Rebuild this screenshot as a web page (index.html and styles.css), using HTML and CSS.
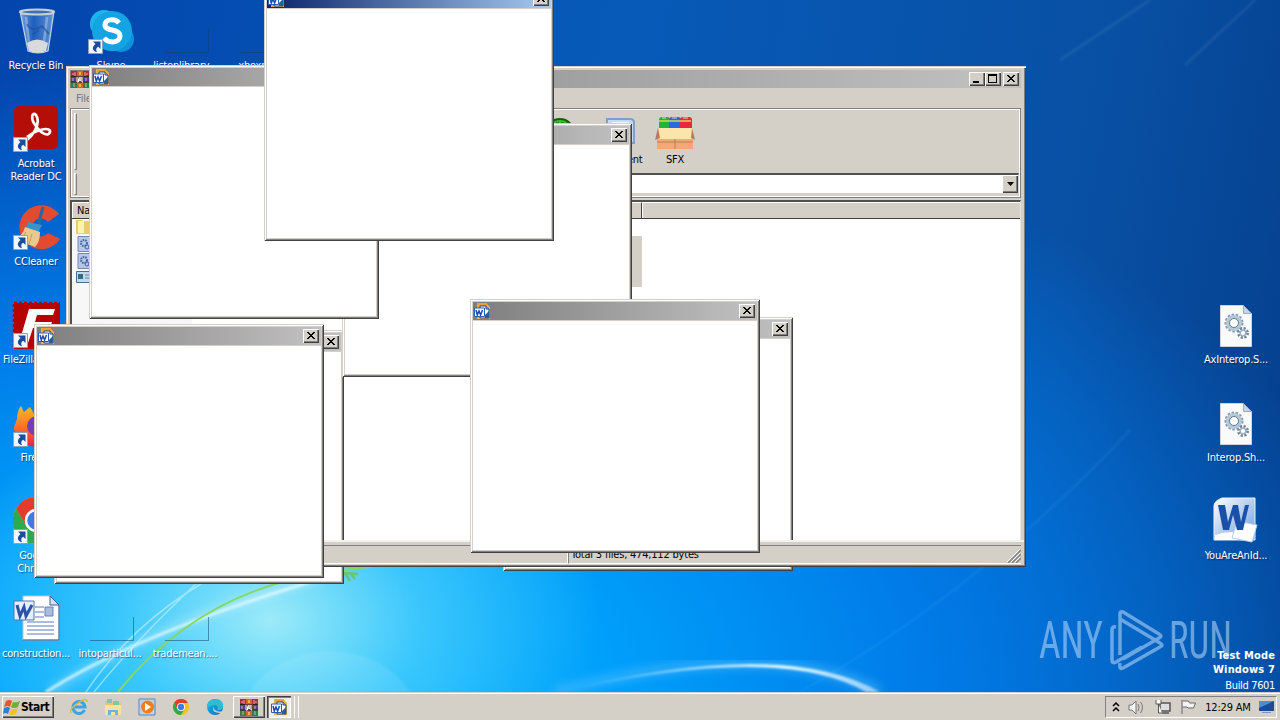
FILE: index.html
```html
<!DOCTYPE html>
<html lang="en">
<head>
  <meta charset="UTF-8">
  <meta name="viewport" content="width=device-width, initial-scale=1.0">
  <title>Desktop</title>
  <link rel="stylesheet" href="styles.css">
</head>
<body>

<!-- Shared icons -->
<svg class="defs" width="0" height="0">
  <defs>
    <symbol id="worddoc" viewBox="0 0 16 16">
      <path d="M3 0h9l4 4v12H3z" fill="#e9b04c"/>
      <path d="M4 0h9v3H4z" fill="#f0a030"/>
      <path d="M6 3h6l3 3v9H6z" fill="#fff" stroke="#1f4680"/>
      <path d="M12 3v3h3" fill="#9cc0ee" stroke="#1f4680"/>
      <path d="M.5 5h10v8.500H.5z" fill="#fff" stroke="#2a5cb4"/>
      <path d="M2 7l1.300 5L5 8l1.600 4L8.500 7" fill="none" stroke="#164ca8" stroke-width="1.500"/>
      <path d="M11 12l4-4v7h-4z" fill="#2c5c9c"/>
    </symbol>
    <symbol id="rar" viewBox="0 0 18 17">
      <path d="M0 0h18v6H0z" fill="#b02838"/>
      <path d="M0 6h18v5H0z" fill="#5a3ca8"/>
      <path d="M0 11h18v6H0z" fill="#2c8048"/>
      <path d="M0 5.500h18M0 11h18" stroke="#222"/>
      <path d="M2 2v2M4 1v4M14 1v4M16 2v2M2 7v3M15 7v3M3 12v4M15 12v4" stroke="#e0b0a0"/>
      <path d="M6 0h6v17H6z" fill="#d86420"/>
      <path d="M5 5h8v7H5z" fill="#604030"/>
      <path d="M6 6v5h1.500V7.500M8.300 6v3.500h1.500V6M11 6v5h1" stroke="#fff" fill="none"/>
      <path d="M8 1h2v3H8zM8 13h2v3H8z" fill="#f0b040"/>
    </symbol>
    <symbol id="shortcut" viewBox="0 0 15 15">
      <path d="M.5.500h14v14H.5z" fill="#f2f7fc" stroke="#8ba2b8"/>
      <path d="M5 2.500h7.500V10l-2.200-2.200C7.800 9 7.800 10.700 9 13.300 4.500 12 3.300 8.500 7.500 5z" fill="#1c4c9c"/>
    </symbol>
    <symbol id="dll" viewBox="0 0 32 42">
      <path d="M.5.500h23l8 8v33H.5z" fill="#fafafa" stroke="#ccd4dc"/>
      <path d="M23.500.500v8h8z" fill="#c8d4e2" stroke="#9cacbe"/>
      <circle cx="14" cy="18" r="7.500" fill="none" stroke="#8298ac" stroke-width="4" stroke-dasharray="2.200 1.460"/>
      <circle cx="14" cy="18" r="6" fill="none" stroke="#b4c8da" stroke-width="4"/>
      <circle cx="14" cy="18" r="4.500" fill="#fff" stroke="#63798c"/>
      <circle cx="23" cy="28" r="4" fill="none" stroke="#71869a" stroke-width="4" stroke-dasharray="1.800 1.340"/>
      <circle cx="23" cy="28" r="2.800" fill="#fff" stroke="#9fb2c4" stroke-width="1.500"/>
    </symbol>
    <symbol id="chrome" viewBox="0 0 48 48">
      <circle cx="24" cy="24" r="24" fill="#fbc116"/>
      <path d="M3.200 12A24 24 0 0 1 44.800 12H24L13.600 30z" fill="#e33b2e"/>
      <path d="M3.200 12A24 24 0 0 0 24 48L34.400 30 24 36 13.600 30z" fill="#2da94f"/>
      <circle cx="24" cy="24" r="12" fill="#fff"/>
      <circle cx="24" cy="24" r="9.500" fill="#3e7be8"/>
    </symbol>
    <symbol id="close" viewBox="0 0 16 14">
      <path d="M4 3l7 7M5 3l7 7M11 3l-7 7M12 3l-7 7" stroke="#000" stroke-width="1"/>
    </symbol>
    <linearGradient id="edge" x1="0" x2="1" y1="0" y2="1">
      <stop offset="0" stop-color="#0cc0e8"/>
      <stop offset="1" stop-color="#1466c4"/>
    </linearGradient>
    <linearGradient id="fox" x1="0" x2="0" y1="0" y2="1">
      <stop offset="0" stop-color="#ffba24"/>
      <stop offset=".5" stop-color="#ff7424"/>
      <stop offset="1" stop-color="#e81c58"/>
    </linearGradient>
    <linearGradient id="wordblue" x1="0" x2="1" y1="0" y2="1">
      <stop offset="0" stop-color="#fff"/>
      <stop offset="1" stop-color="#6c9cdc"/>
    </linearGradient>
    <linearGradient id="glass" x1="0" x2="1" y1="0" y2="0">
      <stop offset="0" stop-color="#a9cdf0" stop-opacity=".75"/>
      <stop offset=".4" stop-color="#3c78cc" stop-opacity=".5"/>
      <stop offset="1" stop-color="#a9cdf0" stop-opacity=".6"/>
    </linearGradient>
  </defs>
</svg>

<div class="desktop">

  <!-- Wallpaper -->
  <svg class="wallpaper" viewBox="0 0 1280 692" preserveAspectRatio="none">
    <defs>
      <linearGradient id="swoosh" x1="0" x2="1" y1="0" y2="0">
        <stop offset="0" stop-color="#fff" stop-opacity="0"/>
        <stop offset=".7" stop-color="#e8fcff" stop-opacity=".95"/>
        <stop offset="1" stop-color="#fff" stop-opacity=".5"/>
      </linearGradient>
      <filter id="soft"><feGaussianBlur stdDeviation="1"/></filter>
      <filter id="softer"><feGaussianBlur stdDeviation="5"/></filter>
    </defs>
    <path d="M50 692Q150 625 320 578" fill="none" stroke="#fff" stroke-opacity=".3" stroke-width="8" filter="url(#softer)"/>
    <path d="M46 692Q140 632 330 576" fill="none" stroke="#e4fbff" stroke-opacity=".75" stroke-width="3" filter="url(#soft)"/>
    <path d="M86 692Q130 626 204 582M94 692Q136 640 198 582" fill="none" stroke="#d4f6ff" stroke-opacity=".55" stroke-width="1.500"/>
    <path d="M118 692Q200 590 330 572T440 566" fill="none" stroke="#86d860" stroke-width="2"/>
    <path d="M344 572l6 9M345 573l13 1M351 574l4 5" fill="none" stroke="#6cc46c" stroke-width="2.500"/>
    <path d="M250 692a90 75 0 0 1 160 0z" fill="#fff" fill-opacity=".09" filter="url(#soft)"/>
    <path d="M555 692Q770 635 880 692" fill="none" stroke="#62c4ff" stroke-opacity=".45" stroke-width="10" filter="url(#softer)"/>
    <path d="M560 692Q780 636 880 692L866 692Q780 642 560 692z" fill="url(#swoosh)" filter="url(#soft)"/>
    <path d="M1060 60L1150 0M1185 65L1255 0" stroke="#88a8d8" stroke-opacity=".14" stroke-width="3" filter="url(#soft)"/>
    <path d="M800 692Q980 590 1130 430" fill="none" stroke="#54b4ff" stroke-opacity=".15" stroke-width="2" filter="url(#soft)"/>
  </svg>

  <!-- Desktop shortcuts -->
  <div class="shortcut recycle">
    <svg class="pic" width="48" height="48" viewBox="0 0 48 48">
      <path d="M8 4h34l-6 40q-10 4-20 0z" fill="url(#glass)" stroke="#bed4e8" stroke-width="1.200"/>
      <path d="M14 10l3 26M35 10l-3 25" stroke="#fff" stroke-opacity=".3" stroke-width="2.500"/>
      <ellipse cx="25" cy="5" rx="17" ry="2.500" fill="#3e70b8" stroke="#c8d0d4" stroke-width="2"/>
      <path d="M15 36q10-7 21 0l-2 8q-9 4-17 0z" fill="#d8dadb"/>
      <path d="M15 17q5 9 15 2l7 8M20 28l7-5" stroke="#1c4ca0" fill="none" stroke-width="2" opacity=".6"/>
    </svg>
    <span>Recycle Bin</span>
  </div>
  <div class="shortcut skype">
    <svg class="pic" width="48" height="48" viewBox="0 0 48 48">
      <circle cx="17" cy="17" r="14" fill="#1eb4ea"/>
      <circle cx="34" cy="32" r="13" fill="#0d92dc"/>
      <circle cx="25" cy="24" r="20" fill="#14a4e4"/>
      <path d="M32 16c-4-5-14-4-14 2 0 7 15 3 15 11 0 7-11 8-16 2" fill="none" stroke="#fff" stroke-width="5"/>
      <use href="#shortcut" x="1" y="32" width="15" height="15"/>
    </svg>
    <span>Skype</span>
  </div>
  <div class="shortcut listen"><i class="ghost"></i><span>listenlibrary...</span></div>
  <div class="shortcut xbox"><i class="ghost"></i><span>xboxpo...</span></div>
  <div class="shortcut acrobat">
    <svg class="pic" width="48" height="48" viewBox="0 0 48 48">
      <rect x="2" y="1" width="44" height="43" rx="5" fill="#b50d08"/>
      <path d="M13 36c9-5 16-19 11-26-4-4-6 4 0 11 5 8 13 11 14 6s-11-4-23 5" fill="none" stroke="#fff" stroke-width="2.700"/>
      <use href="#shortcut" x="1" y="32" width="15" height="15"/>
    </svg>
    <span>Acrobat<br>Reader DC</span>
  </div>
  <div class="shortcut ccleaner">
    <svg class="pic" width="48" height="48" viewBox="0 0 48 48">
      <path d="M47 11A22 22 0 1 0 48 36L36 30A9 9 0 1 1 36 19z" fill="#e24b30"/>
      <path d="M31 4l-5 18" stroke="#246a9c" stroke-width="3"/>
      <path d="M16 19l14 3-4 8-13-4z" fill="#3894c8"/>
      <path d="M13 24l15 5q0 10-5 15L3 36q8-4 10-12z" fill="#eac890"/>
      <path d="M14 29l-5 8M20 31l-3 10" stroke="#c69b60"/>
      <use href="#shortcut" x="1" y="32" width="15" height="15"/>
    </svg>
    <span>CCleaner</span>
  </div>
  <div class="shortcut filezilla">
    <svg class="pic" width="48" height="48" viewBox="0 0 48 48">
      <rect x="2" y="2" width="46" height="46" fill="#b40404" stroke="#b40404" stroke-width="2.500" stroke-dasharray="3 2"/>
      <path d="M17 8h26l-2 6H25l-2 7h17l-2 6H21l-5 15H7z" fill="#fff"/>
      <circle cx="35" cy="39" r="4" fill="#fff"/>
      <use href="#shortcut" x="1" y="32" width="15" height="15"/>
    </svg>
    <span>FileZilla Client</span>
  </div>
  <div class="shortcut firefox">
    <svg class="pic" width="48" height="48" viewBox="0 0 48 48">
      <path d="M5 17Q5 9 9 4l3 6 6-5 4 7 16 5q13 23-12 28Q2 43 2 25z" fill="url(#fox)"/>
      <circle cx="25" cy="24" r="10" fill="#7140b8"/>
      <use href="#shortcut" x="1" y="30" width="15" height="15"/>
    </svg>
    <span>Firefox</span>
  </div>
  <div class="shortcut chrome">
    <svg class="pic" width="48" height="48" viewBox="0 0 48 48">
      <use href="#chrome" x="1" width="47" height="47"/>
      <use href="#shortcut" x="1" y="32" width="15" height="15"/>
    </svg>
    <span>Google<br>Chrome</span>
  </div>
  <div class="shortcut construction">
    <svg class="pic" width="48" height="48" viewBox="0 0 48 48">
      <path d="M11 1h27l9 9v35H11z" fill="#fff" stroke="#b3c4dc"/>
      <path d="M38 1v9h9z" fill="#d8e2f0" stroke="#3c5c94"/>
      <path d="M47 10v35H11" fill="none" stroke="#40608c"/>
      <path d="M23 12h9M23 17h9M23 22h9M15 27h27M15 31h27M15 35h27M15 39h27" stroke="#90a8d4" stroke-width="1.500"/>
      <path d="M33 12h8v9h-8z" fill="#a8bce0" stroke="#6882b8"/>
      <path d="M2 6h20v19H2z" fill="#e6eefa" stroke="#4e76b8"/>
      <path d="M5 10l3 11 4-9 2 9 6-11" fill="none" stroke="#2b55a4" stroke-width="3"/>
    </svg>
    <span>construction...</span>
  </div>
  <div class="shortcut intopart"><i class="ghost"></i><span>intoparticul...</span></div>
  <div class="shortcut trademean"><i class="ghost"></i><span>trademean....</span></div>
  <div class="shortcut axinterop">
    <svg class="pic" width="48" height="48"><use href="#dll" x="8" y="4" width="32" height="42"/></svg>
    <span>AxInterop.S...</span>
  </div>
  <div class="shortcut interop">
    <svg class="pic" width="48" height="48"><use href="#dll" x="8" y="4" width="32" height="42"/></svg>
    <span>Interop.Sh...</span>
  </div>
  <div class="shortcut youare">
    <svg class="pic" width="48" height="48" viewBox="0 0 48 48">
      <path d="M10 1h33v42H2V9q0-5 8-8z" fill="url(#wordblue)" stroke="#eaf2ff"/>
      <path d="M3 38q18-6 34 0v5H3z" fill="#fff"/>
      <path d="M25 24l20 4-5 17-20-4z" fill="#fff" stroke="#b8cbe8"/>
      <path d="M6 8h7l3 17 5-17h5l3 17 4-17h4l-6 25h-6l-4-15-4 15h-6z" fill="#1a51a8"/>
    </svg>
    <span>YouAreAnId...</span>
  </div>

  <!-- Watermark -->
  <svg class="watermark" width="200" height="64" viewBox="0 0 200 64">
    <text x="1" y="49" textLength="64" lengthAdjust="spacingAndGlyphs">ANY</text>
    <path d="M74 51V21q0-4 4-3M74 51q0 4 4 2l26-15M82 46V5q0-3 3-2l36 22q4 2 0 4L85 50M82 10l40 24q4 2 0 4L85 59q-4 2-3-5" fill="none" stroke="#cfe6ff" stroke-width="3.500" stroke-linejoin="round"/>
    <text x="131" y="49" textLength="63" lengthAdjust="spacingAndGlyphs">RUN</text>
  </svg>
  <div class="build"><b>Test Mode</b><b>Windows 7</b><span>Build 7601</span></div>

  <!-- Archive manager -->
  <div class="archive">
    <div class="titlebar">
      <svg width="18" height="17"><use href="#rar"/></svg>
      <div class="controls">
        <div class="btn"><svg width="16" height="14"><path d="M4 9h6v2H4z"/></svg></div>
        <div class="btn"><svg width="16" height="14"><path d="M3 2h9v9H3zM4 4v6h7V4z" fill-rule="evenodd"/></svg></div>
        <div class="btn last"><svg width="16" height="14"><use href="#close"/></svg></div>
      </div>
    </div>
    <div class="menubar">File</div>
    <div class="toolbox">
      <div class="toolbar">
        <i class="grip"></i>
        <div class="tool scan">
          <svg width="40" height="40" viewBox="0 0 40 40"><circle cx="17" cy="20" r="14" fill="#30c820" stroke="#185c10" stroke-width="2"/><path d="M8 11h18" stroke="#174c10" stroke-width="3" stroke-dasharray="3 2"/></svg>
        </div>
        <div class="tool comment">
          <svg width="40" height="40" viewBox="0 0 40 40"><path d="M8 6h23q4 0 4 4v20H8z" fill="#c6dbf0" stroke="#7e9fc6" stroke-width="2"/><path d="M13 10h14q4 0 4 4v13H9" fill="none" stroke="#f2f8ff" stroke-width="2"/></svg>
          <span>Comment</span>
        </div>
        <div class="tool">
          <svg width="40" height="40" viewBox="0 0 40 40">
            <rect x="4" y="4" width="11" height="16" rx="3" fill="#26b03c"/><rect x="14" y="4" width="12" height="16" rx="3" fill="#2e68e0"/><rect x="25" y="4" width="12" height="16" rx="3" fill="#e8283c"/>
            <path d="M4 8h32" stroke="#d8d84c" stroke-width="1.500"/>
            <path d="M7 5h4M17 5h5M28 5h5" stroke="#fff" stroke-opacity=".5" stroke-width="1.500"/>
            <path d="M2 18h36v18H2z" fill="#f3a878"/>
            <path d="M20 20v16M2 29h36" stroke="#c87850"/>
            <path d="M4 15h33l2 11H1z" fill="#fce5aa"/>
            <path d="M3 15L0 27l5-2zM37 15l3 12-4-2z" fill="#b87860"/>
          </svg>
          <span>SFX</span>
        </div>
      </div>
      <div class="address">
        <i class="grip"></i>
        <span class="up"></span>
        <div class="path"><div class="btn drop"><svg width="12" height="14"><path d="M3 5h7L6.500 9z"/></svg></div></div>
      </div>
    </div>
    <div class="list">
      <div class="columns"><div class="col name">Name</div><div class="col"></div></div>
      <div class="rows">
        <div class="row"><svg width="16" height="16"><path d="M0 1h6l1 1h9v13H0z" fill="#e8ce68"/><path d="M2 2h6v12H2z" fill="#fff3b0"/></svg></div>
        <div class="row selected"><svg width="16" height="16"><path d="M2 .5h13v15H2z" fill="#b6c8e8" stroke="#7088b4"/><circle cx="8" cy="7" r="3" fill="none" stroke="#40629c" stroke-width="2" stroke-dasharray="1.500 1"/><circle cx="11" cy="11" r="2" fill="none" stroke="#40629c"/></svg></div>
        <div class="row selected"><svg width="16" height="16"><path d="M2 .5h13v15H2z" fill="#b6c8e8" stroke="#7088b4"/><circle cx="8" cy="7" r="3" fill="none" stroke="#40629c" stroke-width="2" stroke-dasharray="1.500 1"/><circle cx="11" cy="11" r="2" fill="none" stroke="#40629c"/></svg></div>
        <div class="row selected"><svg width="16" height="16"><path d="M.5 1.500h15v11H.5z" fill="#c4d8ec" stroke="#4c6c90"/><path d="M2 4h5v5H2z" fill="#307080"/><path d="M9 5h5M9 8h5" stroke="#6888a8"/></svg></div>
      </div>
    </div>
    <div class="statusbar">
      <div class="pane"></div>
      <div class="pane total">Total 3 files, 474,112 bytes</div>
      <svg class="resize" width="14" height="14"><path d="M1 14L14 1M5 14l9-9M9 14l5-5" stroke="#808080" stroke-width="1.500"/><path d="M0 13L13 0M4 13l9-9M8 13l5-5" stroke="#fff"/></svg>
    </div>
  </div>

  <!-- Message windows -->
  <div class="dialog d1"><div class="titlebar"><svg width="16" height="16"><use href="#worddoc"/></svg><div class="btn"><svg width="16" height="14"><use href="#close"/></svg></div></div></div>
  <div class="dialog d2"><div class="titlebar"><svg width="16" height="16"><use href="#worddoc"/></svg><div class="btn"><svg width="16" height="14"><use href="#close"/></svg></div></div></div>
  <div class="dialog d3"><div class="titlebar"><svg width="16" height="16"><use href="#worddoc"/></svg><div class="btn"><svg width="16" height="14"><use href="#close"/></svg></div></div></div>
  <div class="dialog d4"><div class="titlebar"><svg width="16" height="16"><use href="#worddoc"/></svg><div class="btn"><svg width="16" height="14"><use href="#close"/></svg></div></div></div>
  <div class="dialog d5"><div class="titlebar"><svg width="16" height="16"><use href="#worddoc"/></svg><div class="btn"><svg width="16" height="14"><use href="#close"/></svg></div></div></div>
  <div class="dialog d6"><div class="titlebar"><svg width="16" height="16"><use href="#worddoc"/></svg><div class="btn"><svg width="16" height="14"><use href="#close"/></svg></div></div></div>
  <div class="dialog d7 active"><div class="titlebar"><svg width="16" height="16"><use href="#worddoc"/></svg><div class="btn"><svg width="16" height="14"><use href="#close"/></svg></div></div></div>
</div>

<!-- Taskbar -->
<div class="taskbar">
  <div class="start">
    <svg width="18" height="17" viewBox="0 0 18 17">
      <path d="M3 2q4-2 6 0L7 8Q5 6 1 8z" fill="#e85624"/>
      <path d="M10 3q3 1 7-1l-2 6q-4 2-7 0z" fill="#6cb42c"/>
      <path d="M1 9q4-2 6 0l-2 6q-3-2-5 0z" fill="#2c80d4"/>
      <path d="M8 10q3 1 7-1l-2 6q-4 2-7 0z" fill="#f6c024"/>
    </svg>
    <b>Start</b>
  </div>
  <div class="quick">
    <svg width="18" height="18" viewBox="0 0 18 18"><path d="M14.500 12A6 6 0 1 1 15 9H5" fill="none" stroke="#3aa4e4" stroke-width="3"/><path d="M1 15q-2-4 7-10 9-6 9-1" fill="none" stroke="#e9b52c" stroke-width="1.500"/></svg>
    <svg width="18" height="18" viewBox="0 0 18 18"><path d="M1 3h6l2 2h8v12H1z" fill="#e6c66c"/><path d="M3 1h5v4H3zM9 3h6v4H9z" fill="#8bc2a0"/><path d="M1 7h16v10H1z" fill="#f7e39c"/><path d="M4 17v-5h10v5h-3v-3H7v3z" fill="#6cb4dc"/></svg>
    <svg width="18" height="18" viewBox="0 0 18 18"><path d="M1 1h16v16H1z" fill="#b8d4ee" stroke="#5488b8"/><circle cx="9.500" cy="9" r="6.500" fill="#ef8018"/><path d="M7 5l6 4-6 4z" fill="#fff"/></svg>
    <svg width="18" height="18"><use href="#chrome" x="1" y="1" width="16" height="16"/></svg>
    <svg width="18" height="18" viewBox="0 0 18 18"><circle cx="9" cy="9" r="8" fill="url(#edge)"/><path d="M17 8q0 5-6 4 2-5-3-5-6 1-7 4Q0 2 9 1q8 0 8 7z" fill="#2ebbd6"/><path d="M8 8q-1 4 3 5 3 1 5 0l-1 2q-8 0-8-4z" fill="#d5d0c9"/></svg>
  </div>
  <div class="task"><svg width="18" height="17"><use href="#rar"/></svg></div>
  <div class="task pressed"><svg width="16" height="16"><use href="#worddoc"/></svg></div>
  <i class="sliver"></i><i class="sliver"></i>
  <div class="tray">
    <svg width="8" height="12"><path d="M1 5l3-3 3 3M1 10l3-3 3 3" fill="none" stroke="#000" stroke-width="1.500"/></svg>
    <svg width="18" height="16"><path d="M1 6h3l4-4v13l-4-4H1z" fill="#f6f6f6" stroke="#777"/><path d="M10 5q2 3 0 7M12.500 3q4 5 0 11" fill="none" stroke="#777"/></svg>
    <svg width="17" height="16"><path d="M5 4h10v8H5zM7 14h7" fill="#ddd" stroke="#555" stroke-width="1.500"/><path d="M1 1v4h5V1M3.500 5v9H7" fill="#fff" stroke="#555"/></svg>
    <svg width="17" height="16"><path d="M2 1v14M2.500 2h6l1 2h6l-2 5H8L7 8H2.500" fill="#f4f4f4" stroke="#666"/></svg>
    <span>12:29 AM</span>
    <svg width="15" height="14"><path d="M0 1h15v10H0z" fill="#1b4c9c"/><path d="M0 1h15L0 8z" fill="#4c8cd8"/><path d="M3 12h9v1H3z" fill="#7b95bb"/></svg>
  </div>
</div>

</body>
</html>
```
FILE: styles.css
```css
/* General Styles */
* {
  box-sizing: border-box;
}
body {
  margin: 0;
  width: 1280px;
  height: 720px;
  overflow: hidden;
  display: flex;
  flex-direction: column;
  font-family: "DejaVu Sans Condensed", "DejaVu Sans", sans-serif;
  font-stretch: condensed;
  font-size: 11px;
  line-height: 13px;
  letter-spacing: -0.2px;
}
svg {
  display: block;
  flex: none;
}
.defs {
  position: absolute;
}

/* Desktop */
.desktop {
  position: relative;
  height: 692px;
  overflow: hidden;
  background:
    radial-gradient(ellipse 330px 240px at 270px 620px, rgba(165, 238, 248, 0.95), rgba(90, 215, 252, 0.65) 45%, rgba(30, 180, 255, 0) 100%),
    radial-gradient(ellipse 1150px 620px at 260px 680px, #00b4ff 0%, #00a0fb 30%, #007be8 58%, rgba(0, 90, 200, 0) 100%),
    linear-gradient(100deg, #0345ad 0%, #075ab8 45%, #0850a4 80%, #053e8c 100%);
}
.wallpaper {
  position: absolute;
  width: 1280px;
  height: 692px;
}
.shortcut {
  position: absolute;
  width: 76px;
  display: flex;
  flex-direction: column;
  align-items: center;
  color: #fff;
  text-align: center;
  white-space: nowrap;
  text-shadow: 1px 1px 1px rgba(0, 20, 60, 0.6);
}
.shortcut span {
  margin-top: 4px;
}
.ghost {
  width: 44px;
  height: 24px;
  margin: 22px 0 2px 4px;
  border-right: 1px solid rgba(20, 60, 100, 0.5);
  border-bottom: 1px solid rgba(20, 60, 100, 0.5);
}
.recycle { left: -2px; top: 7px; }
.skype { left: 73px; top: 7px; }
.listen { left: 147px; top: 7px; }
.xbox { left: 222px; top: 7px; }
.acrobat { left: -2px; top: 105px; }
.ccleaner { left: -2px; top: 203px; }
.filezilla { left: -2px; top: 301px; }
.firefox { left: -2px; top: 402px; }
.firefox span { margin-top: 1px; }
.chrome { left: -2px; top: 497px; }
.construction { left: -2px; top: 595px; }
.intopart { left: 72px; top: 595px; }
.trademean { left: 147px; top: 595px; }
.axinterop { left: 1198px; top: 301px; }
.interop { left: 1198px; top: 399px; }
.youare { left: 1198px; top: 497px; }
.watermark {
  position: absolute;
  left: 1038px;
  top: 609px;
  opacity: 0.5;
}
.watermark text {
  font-family: Roboto, sans-serif;
  font-weight: 400;
  font-size: 52px;
  letter-spacing: 0;
  fill: #cfe6ff;
}
.build {
  position: absolute;
  right: 5px;
  top: 649px;
  display: flex;
  flex-direction: column;
  align-items: flex-end;
  gap: 1px;
  color: #fff;
}
.build b {
  letter-spacing: 0.15px;
}
.build span {
  margin-top: 2px;
  letter-spacing: -0.35px;
}

/* Window parts */
.titlebar {
  height: 18px;
  display: flex;
  align-items: center;
  justify-content: space-between;
  padding: 0 2px 0 1px;
  background: linear-gradient(90deg, #7e7e7e, #c1c1c1);
}
.btn {
  width: 16px;
  height: 14px;
  background: #d4d0c8;
  box-shadow: inset 1px 1px #fff, inset -1px -1px #404040, inset -2px -2px #808080;
}

/* Archive manager */
.archive {
  position: absolute;
  left: 66px;
  top: 66px;
  width: 960px;
  height: 501px;
  display: flex;
  flex-direction: column;
  padding: 4px 5px 0 4px;
  background: #d4d0c8;
  box-shadow: inset 1px 1px #d4d0c8, inset 2px 2px #fff, inset -1px 0 #404040, inset -2px 0 #808080;
}
.controls {
  display: flex;
}
.controls .last {
  margin-left: 2px;
}
.menubar {
  height: 20px;
  padding: 4px 6px;
  color: #777;
}
.toolbox {
  height: 90px;
  border: 1px solid #808080;
  box-shadow: inset 1px 1px #fff, inset -1px -1px #fff;
}
.toolbar {
  height: 63px;
  padding: 4px 2px 0;
  display: flex;
}
.grip {
  width: 3px;
  height: 57px;
  margin-left: 1px;
  border: 1px solid #fff;
  border-right-color: #808080;
  border-bottom-color: #808080;
}
.tool {
  width: 56px;
  display: flex;
  flex-direction: column;
  align-items: center;
}
.scan {
  margin-left: 458px;
}
.address {
  display: flex;
  padding: 1px 1px 0 2px;
}
.address .grip {
  height: 22px;
}
.up {
  width: 60px;
}
.path {
  flex: 1;
  height: 21px;
  display: flex;
  justify-content: flex-end;
  background: #fff;
  border: 1px solid #d4d0c8;
  border-top: 2px solid #505050;
}
.drop {
  height: 18px;
  padding: 2px;
}
.list {
  margin-top: 2px;
  height: 340px;
  border-top: 2px solid #505050;
  border-left: 2px solid #505050;
  border-right: 1px solid #e8e5df;
  background: #fff;
}
.columns {
  height: 17px;
  display: flex;
  background: #d4d0c8;
  border-bottom: 1px solid #404040;
}
.col {
  flex: 1;
  padding: 1px 4px;
  border-left: 1px solid #fff;
  border-top: 1px solid #fff;
}
.name {
  flex: none;
  width: 570px;
  border-right: 1px solid #404040;
}
.rows {
  width: 120px;
  height: 321px;
  background: #f7f7f7;
}
.row {
  width: 570px;
  height: 17px;
  padding-left: 4px;
}
.selected {
  background: linear-gradient(90deg, transparent 22px, #d4d0c8 22px);
}
/* painted over the dialogs that lie behind the archive window */
.statusbar {
  position: relative;
  z-index: 3;
  height: 27px;
  margin: 0 -5px 0 -4px;
  padding: 5px 5px 3px 4px;
  display: flex;
  background: #d4d0c8;
  box-shadow: inset -1px -1px #404040, inset -2px -2px #808080, inset 0 2px #f4f2ee, inset 2px 0 #fff;
}
.pane {
  width: 498px;
  border-top: 1px solid #808080;
  border-bottom: 1px solid #fff;
  border-right: 1px solid #fff;
}
.total {
  flex: 1;
  padding: 2px 2px;
  border-left: 1px solid #808080;
  border-right: 0;
}
.resize {
  position: absolute;
  right: 5px;
  bottom: 4px;
}

/* Dialogs */
.dialog {
  position: absolute;
  z-index: 4;
  width: 290px;
  height: 254px;
  padding: 3px;
  background: #fff;
  box-shadow: inset 1px 1px #d4d0c8, inset -1px -1px #404040, inset 2px 2px #fff, inset -2px -2px #808080, inset 3px 3px #d4d0c8, inset -3px -3px #d4d0c8;
}
.dialog .titlebar {
  border-bottom: 0;
  box-shadow: 0 1px #d4d0c8;
}
.active .titlebar {
  background: linear-gradient(90deg, #0a246a, #a6caf0);
}
.d1 { left: 503px; top: 317px; z-index: 2; }
.d2 { left: 54px; top: 330px; z-index: 2; }
.d3 { left: 342px; top: 123px; }
.d4 { left: 470px; top: 299px; }
.d5 { left: 89px; top: 65px; }
.d6 { left: 34px; top: 324px; }
.d7 { left: 264px; top: -13px; }

/* Taskbar */
.taskbar {
  height: 28px;
  display: flex;
  align-items: center;
  padding: 3px 3px 1px 2px;
  background: #d4d0c8;
  box-shadow: inset 0 1px #d4d0c8, inset 0 2px #fff;
}
.start {
  width: 52px;
  height: 22px;
  display: flex;
  align-items: center;
  padding-left: 1px;
  font-size: 12px;
  letter-spacing: -0.5px;
  box-shadow: inset 1px 1px #fff, inset -1px -1px #404040, inset -2px -2px #808080;
}
.quick {
  display: flex;
  gap: 16px;
  margin: 0 9px 0 16px;
}
.task {
  width: 32px;
  height: 22px;
  display: flex;
  align-items: center;
  justify-content: center;
  margin-right: 2px;
  box-shadow: inset 1px 1px #fff, inset -1px -1px #404040, inset -2px -2px #808080;
}
.pressed {
  width: 24px;
  margin-right: 0;
  background: #efede9;
  box-shadow: inset 1px 1px #404040, inset 2px 2px #808080, inset -1px -1px #fff;
}
.sliver {
  width: 4px;
  height: 22px;
  border-right: 1px solid #fff;
}
.tray {
  margin-left: auto;
  width: 172px;
  height: 22px;
  display: flex;
  align-items: center;
  justify-content: space-between;
  padding: 0 2px 0 6px;
  border: 1px solid #808080;
  border-right-color: #fff;
  border-bottom-color: #fff;
}
```
